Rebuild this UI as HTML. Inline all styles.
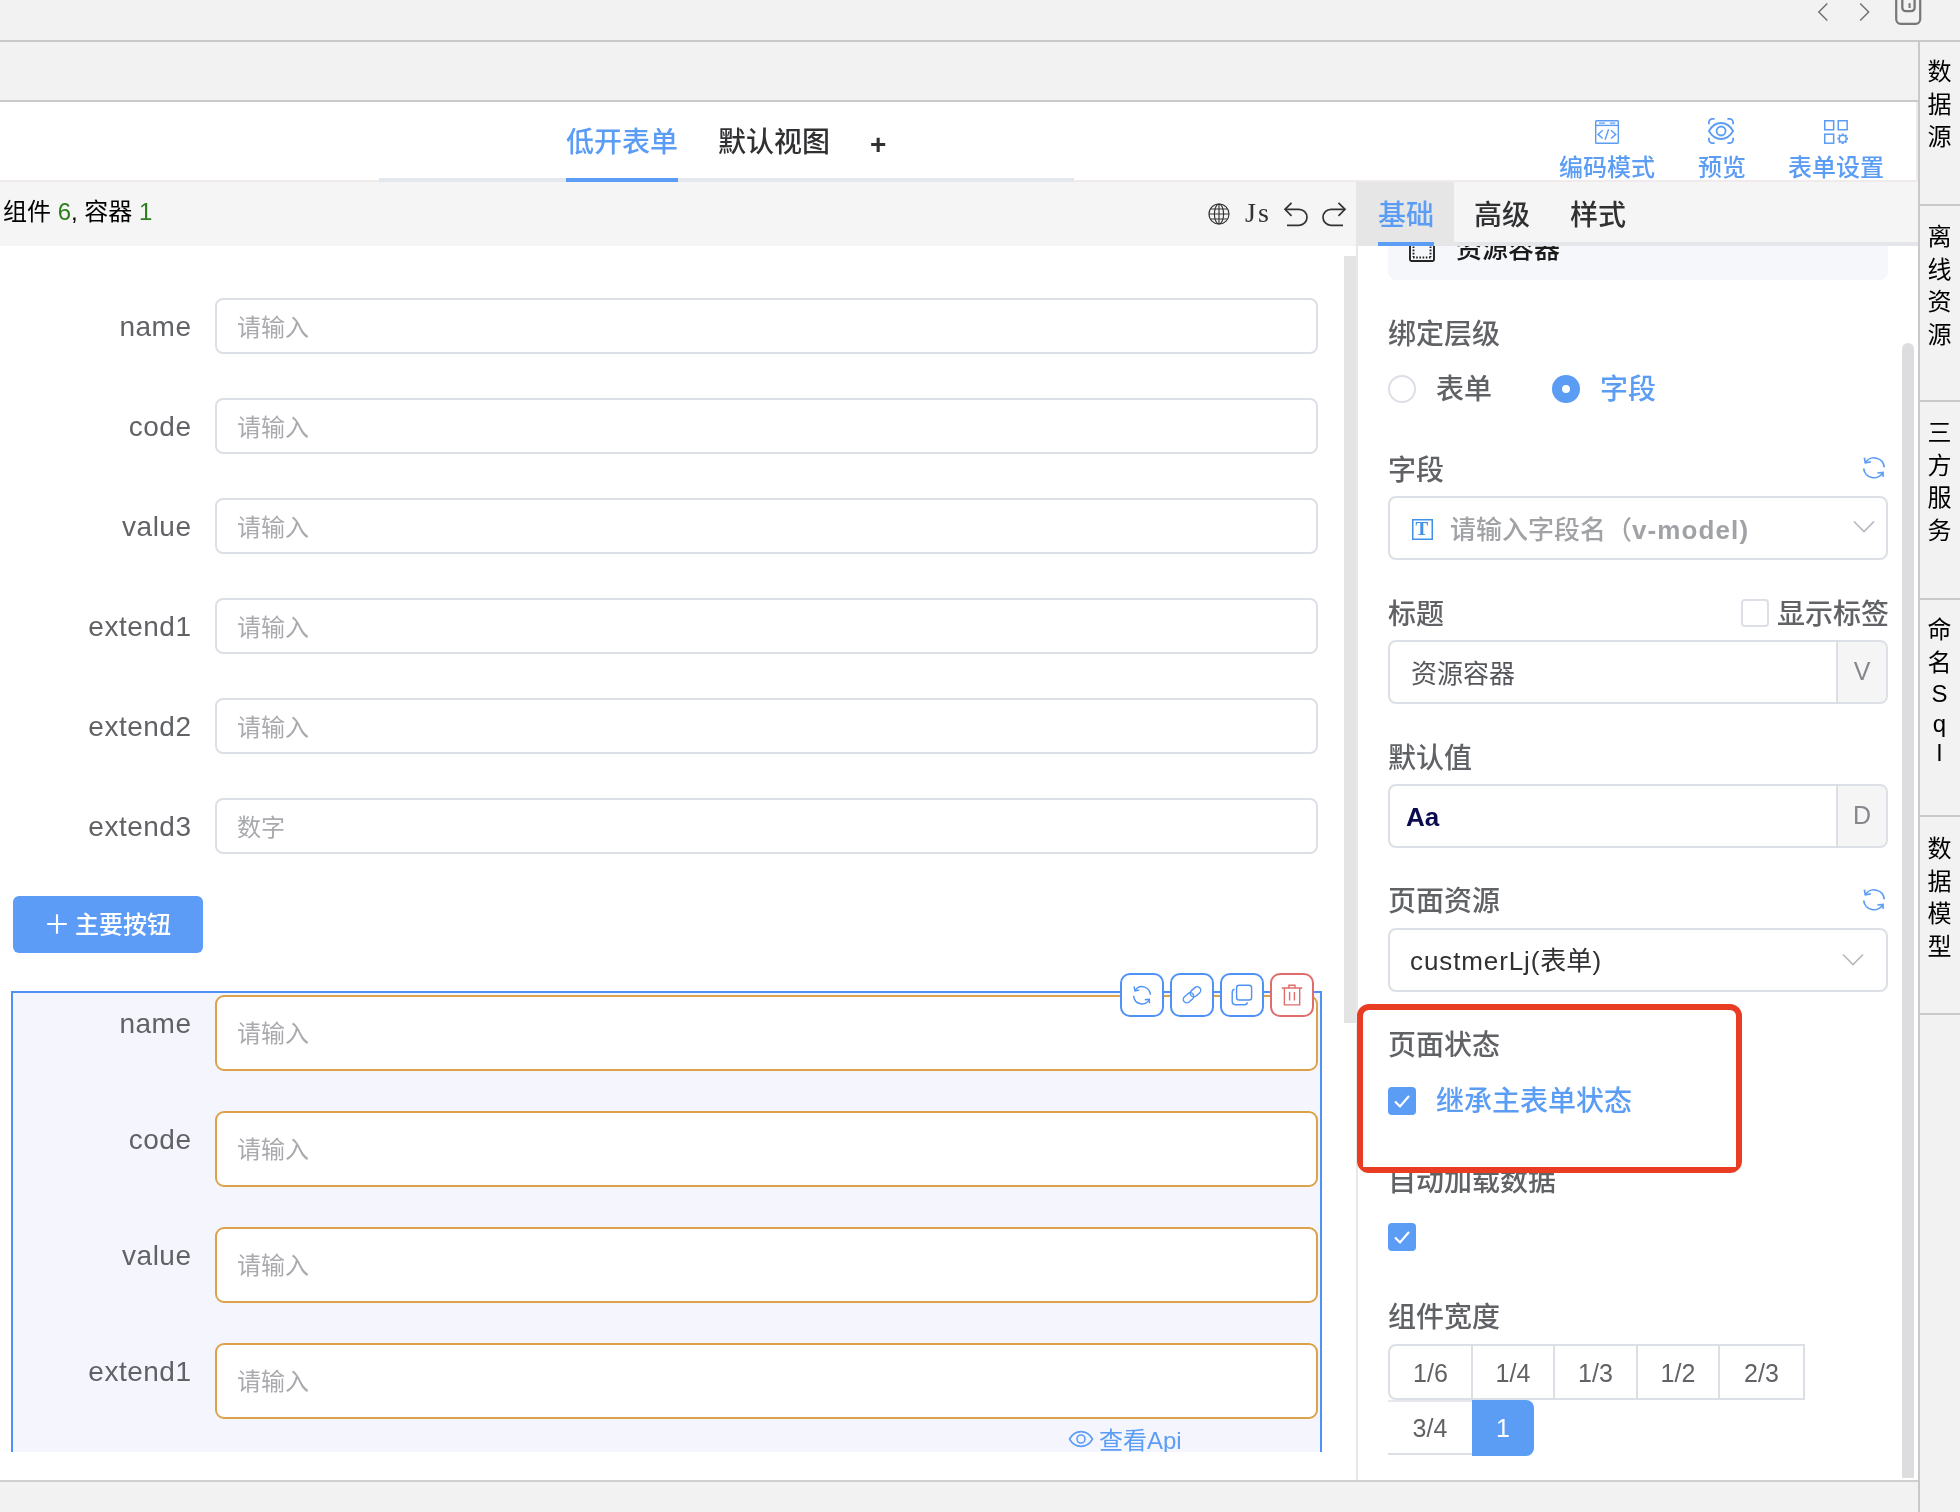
<!DOCTYPE html>
<html lang="zh-CN">
<head>
<meta charset="utf-8">
<title>低开表单</title>
<style>
*{box-sizing:border-box;margin:0;padding:0}
html,body{width:1960px;height:1512px;overflow:hidden;background:#f2f2f2}
body{will-change:transform;position:relative;font-family:"Liberation Sans","Noto Sans CJK SC",sans-serif;color:#303133}
.abs{position:absolute}
.t{position:absolute;white-space:nowrap;line-height:1}
/* top */
#hl1{left:0;top:40px;width:1960px;height:2px;background:#c9c9c9}
#hl2{left:0;top:100px;width:1918px;height:2px;background:#c9c9c9}
#white{left:0;top:102px;width:1916px;height:78px;background:#fff;border-bottom:0}
#pink{left:0;top:180px;width:1918px;height:2px;background:#f1eaea}
#tabline{left:379px;top:178px;width:695px;height:4px;background:#e4e7ed}
#tabblue{left:566px;top:178px;width:112px;height:4px;background:#5b9cf5}
#toolbar{left:0;top:182px;width:1918px;height:64px;background:#f5f5f5}
#canvas{left:0;top:246px;width:1357px;height:1234px;background:#fff}
#vscroll{left:1344px;top:256px;width:12px;height:767px;background:#e4e4e4}
/* right sidebar */
#side{left:1918px;top:42px;width:42px;height:1470px;background:#f2f2f2;border-left:2px solid #c9c9c9}
.sl{position:absolute;left:1920px;width:40px;height:2px;background:#c9c9c9}
.vt{position:absolute;left:1919.5px;width:40px;text-align:center;font-size:24px;line-height:32.5px;color:#000}
.vt .la{display:block;line-height:29.5px}

.lab{position:absolute;left:0;width:191.5px;letter-spacing:0.5px;text-align:right;font-size:28px;line-height:32px;color:#606266;white-space:nowrap}
.inp{position:absolute;left:215px;width:1103px;height:56px;border:2px solid #dcdfe6;border-radius:8px;background:#fff}
.inp span,.inp2 span{position:absolute;left:21px;font-size:24px;line-height:24px;color:#a9aaae;white-space:nowrap}
.inp span{top:16px;left:20px}
.inp2{position:absolute;left:215px;width:1103px;height:76px;border:2px solid #dba24a;border-radius:9px;background:#fff}
.inp2 span{top:25px;left:20px}
#cont{left:11px;top:991px;width:1311px;height:461px;background:#f5f6fd;border:2px solid #4f92f6;border-bottom:none}
.ab{position:absolute;top:973px;width:44px;height:44px;border:2px solid #4f92f6;border-radius:10px;background:#fff}
.ab svg{position:absolute;left:-2px;top:-2px;width:44px;height:44px}

.pl{position:absolute;left:1388px;font-size:28px;line-height:28px;color:#606266;font-weight:500;white-space:nowrap}
.box{position:absolute;left:1388px;width:500px;height:64px;border:2px solid #dcdfe6;border-radius:8px;background:#fff;overflow:hidden}
.box .app{position:absolute;right:0;top:0;width:50px;height:60px;background:#f5f5f6;border-left:2px solid #dcdfe6;text-align:center;font-size:25px;line-height:59px;color:#85878c}
.box .tx{position:absolute;left:21px;top:20px;font-size:26px;line-height:26px;white-space:nowrap}
.cb{position:absolute;width:28px;height:28px;border-radius:4px;background:#5b9cf5}
.cb svg{position:absolute;left:0;top:0;width:28px;height:28px}
.wb{position:absolute;top:1344px;height:56px;border:2px solid #dcdfe6;border-left:none;background:#fff;text-align:center;font-size:25px;line-height:54px;color:#606266}
.ref{position:absolute;left:1862.5px;width:22px;height:22.5px}
/* bottom */
#bl{left:0;top:1480px;width:1918px;height:2px;background:#d0d0d0}
#bottom{left:0;top:1482px;width:1918px;height:30px;background:#f2f2f2}
/* panel */
#panel{left:1357px;top:246px;width:561px;height:1234px;background:#fff}
</style>
</head>
<body>
<div class="abs" id="hl1"></div>
<div class="abs" id="hl2"></div>
<div class="abs" id="white"></div>
<div class="abs" id="pink"></div>
<div class="abs" style="left:1916px;top:102px;width:2px;height:80px;background:#f1eaea"></div>
<div class="abs" id="tabline"></div>
<div class="abs" id="tabblue"></div>
<div class="abs" id="toolbar"></div>
<div class="abs" id="canvas"></div>
<div class="abs" id="vscroll"></div>
<div class="abs" id="panel"></div>
<div class="abs" id="bl"></div>
<div class="abs" id="bottom"></div>
<div class="abs" id="side"></div>

<div class="sl" style="top:204px"></div>
<div class="sl" style="top:400px"></div>
<div class="sl" style="top:598px"></div>
<div class="sl" style="top:815px"></div>
<div class="sl" style="top:1013px"></div>
<div class="vt" id="v1" style="top:56px">数<br>据<br>源</div>
<div class="vt" id="v2" style="top:221px">离<br>线<br>资<br>源</div>
<div class="vt" id="v3" style="top:417px">三<br>方<br>服<br>务</div>
<div class="vt" id="v4" style="top:614px">命<br>名<br><span class="la">S<br>q<br>l</span></div>
<div class="vt" id="v5" style="top:833px">数<br>据<br>模<br>型</div>
<!--SIDE-->

<svg class="abs" style="left:1810px;top:0;width:120px;height:30px" viewBox="0 0 120 30" fill="none" stroke="#6e6e6e" stroke-width="1.4">
<path d="M17.3 3.5 L8.8 12 L17.3 20.5"/>
<path d="M50.2 3.5 L58.7 12 L50.2 20.5"/>
<rect x="86.2" y="-4" width="24" height="27.8" rx="4.5" stroke="#777" stroke-width="2.2"/>
<path d="M92.3 -2 V7.7 a3.5 3.5 0 0 0 3.5 3.5 h5.3 a3.5 3.5 0 0 0 3.5 -3.5 V-2" stroke="#777" stroke-width="2.3"/>
<path d="M99.6 3.2 V8" stroke="#777" stroke-width="2.1"/>
</svg>
<div class="t" id="tab1" style="left:566px;top:129px;font-size:28px;color:#5b9cf5;font-weight:500">低开表单</div>
<div class="t" id="tab2" style="left:718px;top:129px;font-size:28px;color:#303133;font-weight:500">默认视图</div>
<div class="t" id="tabp" style="left:870px;top:131px;font-size:28px;color:#303133;font-weight:bold">+</div>
<svg class="abs" id="ic1" style="left:1595px;top:120px;width:24px;height:24px" viewBox="0 0 24 24" fill="none" stroke="#5b9cf5" stroke-width="1.4">
<rect x="0.7" y="0.7" width="22.6" height="22.6" rx="0.8"/><path d="M0.7 5.4 H23.3"/><path d="M3.9 3.1 H10 M15 3.1 H20.3" stroke-width="1.1"/>
<path d="M7.8 10.2 L3 14.4 L7.8 18.5 M16 10.2 L20.8 14.4 L16 18.5 M13.6 9.2 L10.1 19.8"/>
</svg>
<svg class="abs" id="ic2" style="left:1708px;top:118px;width:26px;height:26px" viewBox="0 0 26 26" fill="none" stroke="#5b9cf5" stroke-width="1.8">
<path d="M0.9 13 C5 6 9.5 5 13 5 S21 6 25.1 13 C21 20 16.5 21 13 21 S5 20 0.9 13 Z"/>
<circle cx="13.1" cy="13" r="4.5"/>
<path d="M0.9 6.3 V4.5 A3.6 3.6 0 0 1 4.5 0.9 H6.6 M19.4 0.9 H21.5 A3.6 3.6 0 0 1 25.1 4.5 V6.3 M25.1 19.7 V21.5 A3.6 3.6 0 0 1 21.5 25.1 H19.4 M6.6 25.1 H4.5 A3.6 3.6 0 0 1 0.9 21.5 V19.7"/>
</svg>
<svg class="abs" id="ic3" style="left:1824px;top:120px;width:24px;height:24px" viewBox="0 0 24 24" fill="none" stroke="#5b9cf5" stroke-width="1.5">
<rect x="0.75" y="0.75" width="8.9" height="9"/><rect x="14.25" y="0.75" width="8.9" height="9"/><rect x="0.75" y="14.2" width="8.9" height="9"/>
<circle cx="18.7" cy="18.7" r="3.5"/><path d="M22.70 18.70 L24.00 18.70 M21.53 21.53 L22.45 22.45 M18.70 22.70 L18.70 24.00 M15.87 21.53 L14.95 22.45 M14.70 18.70 L13.40 18.70 M15.87 15.87 L14.95 14.95 M18.70 14.70 L18.70 13.40 M21.53 15.87 L22.45 14.95" stroke-width="2.2"/>
</svg>
<div class="t" id="b1" style="top:156px;left:1559px;font-size:24px;color:#5b9cf5;font-weight:500">编码模式</div>
<div class="t" id="b2" style="top:156px;left:1698px;font-size:24px;color:#5b9cf5;font-weight:500">预览</div>
<div class="t" id="b3" style="top:156px;left:1788px;font-size:24px;color:#5b9cf5;font-weight:500">表单设置</div>
<div class="t" id="cnt" style="left:3px;top:200px;font-size:24px;color:#000">组件 <span style="color:#2c7d1c">6</span>, 容器 <span style="color:#2c7d1c">1</span></div>
<svg class="abs" id="globe" style="left:1208px;top:203px;width:22px;height:22px" viewBox="0 0 22 22" fill="none" stroke="#333" stroke-width="1.15">
<circle cx="11" cy="11" r="10"/><ellipse cx="11" cy="11" rx="4.6" ry="10"/><path d="M11 1 V21 M1 11 H21 M2.6 6 H19.4 M2.6 16 H19.4"/>
</svg>
<div class="t" id="js" style="left:1245px;top:199px;font-size:28px;letter-spacing:2px;color:#333;font-family:'Liberation Serif',serif">Js</div>
<svg class="abs" id="undo" style="left:1283px;top:201px;width:26px;height:26px" viewBox="0 0 26 26" fill="none" stroke="#333" stroke-width="1.7">
<path d="M8.5 1.8 L2 8.3 L8.5 14.8"/><path d="M2.2 8.3 H16 A8 8 0 0 1 16 24.3 H4"/>
</svg>
<svg class="abs" id="redo" style="left:1321px;top:201px;width:26px;height:26px" viewBox="0 0 26 26" fill="none" stroke="#333" stroke-width="1.7">
<path d="M17.5 1.8 L24 8.3 L17.5 14.8"/><path d="M23.8 8.3 H10 A8 8 0 0 0 10 24.3 H22"/>
</svg>
<div class="abs" style="left:1356px;top:182px;width:98px;height:64px;background:#e6e6e6"></div>
<div class="abs" style="left:1454px;top:242px;width:464px;height:4px;background:#e4e6ea"></div>
<div class="abs" style="left:1378px;top:242px;width:56px;height:4px;background:#5b9cf5"></div>
<div class="t" id="pt1" style="font-weight:500;left:1378px;top:202px;font-size:28px;color:#5b9cf5">基础</div>
<div class="t" id="pt2" style="font-weight:500;left:1474px;top:202px;font-size:28px;color:#303133">高级</div>
<div class="t" id="pt3" style="font-weight:500;left:1570px;top:202px;font-size:28px;color:#303133">样式</div>
<!--TOP-->
<div class="lab" id="l0" style="top:311px">name</div><div class="inp" id="i0" style="top:298px"><span>请输入</span></div>
<div class="lab" id="l1" style="top:411px">code</div><div class="inp" id="i1" style="top:398px"><span>请输入</span></div>
<div class="lab" id="l2" style="top:511px">value</div><div class="inp" id="i2" style="top:498px"><span>请输入</span></div>
<div class="lab" id="l3" style="top:611px">extend1</div><div class="inp" id="i3" style="top:598px"><span>请输入</span></div>
<div class="lab" id="l4" style="top:711px">extend2</div><div class="inp" id="i4" style="top:698px"><span>请输入</span></div>
<div class="lab" id="l5" style="top:811px">extend3</div><div class="inp" id="i5" style="top:798px"><span>数字</span></div>
<div class="abs" id="btn" style="left:13px;top:896px;width:190px;height:57px;background:#5c9cf7;border-radius:6px"></div>
<svg class="abs" style="left:47px;top:914px;width:20px;height:20px" viewBox="0 0 20 20" stroke="#fff" stroke-width="2.1" fill="none"><path d="M10 0.2 V19.8 M0.2 10 H19.8"/></svg>
<div class="t" id="btnt" style="left:75px;top:913px;font-size:24px;color:#fff;font-weight:500">主要按钮</div>
<div class="abs" id="cont"></div>
<div class="lab" id="m0" style="top:1008px">name</div><div class="inp2" id="j0" style="top:995px"><span>请输入</span></div>
<div class="lab" id="m1" style="top:1124px">code</div><div class="inp2" id="j1" style="top:1111px"><span>请输入</span></div>
<div class="lab" id="m2" style="top:1240px">value</div><div class="inp2" id="j2" style="top:1227px"><span>请输入</span></div>
<div class="lab" id="m3" style="top:1356px">extend1</div><div class="inp2" id="j3" style="top:1343px"><span>请输入</span></div>
<div class="ab" style="left:1120px"><svg viewBox="0 0 44 44" fill="none" stroke="#4f92f6" stroke-width="1.4"><path d="M14.9 17.9 A8.4 9 0 0 1 30.4 21.8 M13.6 22.9 A8.4 9 0 0 0 29.3 26.3"/><path d="M14.1 13.4 L14.9 17.9 L19.4 17.1 M24.8 26.8 L29.3 26.3 L29.5 30.2"/></svg></div>
<div class="ab" style="left:1170px"><svg viewBox="0 0 44 44" fill="none" stroke="#4f92f6" stroke-width="1.4"><g transform="rotate(-41 22 21.8)"><rect x="11.6" y="18.3" width="11.6" height="7" rx="3.5"/><rect x="20.8" y="18.3" width="11.6" height="7" rx="3.5"/></g></svg></div>
<div class="ab" style="left:1220px"><svg viewBox="0 0 44 44" fill="none" stroke="#4f92f6" stroke-width="1.4"><rect x="16.6" y="12.2" width="15" height="14.8" rx="2.6"/><path d="M14.6 16.2 Q12.2 16.6 12.2 19.5 V28.6 Q12.2 31.7 15.3 31.7 H24.3 Q27.2 31.7 27.5 29.4"/></svg></div>
<div class="ab" style="left:1270px;border-color:#e06c6c"><svg viewBox="0 0 44 44" fill="none" stroke="#e06c6c" stroke-width="1.4"><path d="M11.7 15 H32.2 M18.9 14.6 V12.3 H25 V14.6 M14.4 15 V31.9 H29.7 V15 M19.6 19 V27.6 M24.4 19 V27.6"/></svg></div>
<svg class="abs" style="left:1068px;top:1429px;width:26px;height:20px" viewBox="0 0 26 20" fill="none" stroke="#5b9cf5" stroke-width="1.6"><path d="M1.5 10 C5 3.8 9.5 2.6 13 2.6 S21 3.8 24.5 10 C21 16.2 16.5 17.4 13 17.4 S5 16.2 1.5 10 Z"/><circle cx="13" cy="10" r="4"/></svg>
<div class="t" id="api" style="left:1099px;top:1429px;font-size:24px;color:#5b9cf5">查看Api</div>
<div class="abs" style="left:0;top:1452px;width:1344px;height:28px;background:#fff"></div>
<div class="abs" style="left:1356px;top:246px;width:2px;height:1234px;background:#e8e8e8"></div>
<!--CANVAS-->

<div class="abs" style="left:1358px;top:246px;width:544px;height:40px;overflow:hidden">
 <div class="abs" style="left:30px;top:-30px;width:500px;height:64px;background:#f6f7fb;border-radius:8px"></div>
 <svg class="abs" style="left:51px;top:-10px;width:26px;height:26px" viewBox="0 0 26 26" fill="none" stroke="#222" stroke-width="1.9"><path d="M1 4 V23.5 Q1 25 2.5 25 H23.5 Q25 25 25 23.5 V4"/><path d="M4 21.5 H22" stroke-dasharray="1.6 1.6"/><path d="M4.5 4 V21 M21.5 4 V21" stroke-dasharray="1.6 1.6"/></svg>
 <div class="t" id="rc" style="left:98px;top:-10px;font-size:26px;color:#1a1a1a;font-weight:500">资源容器</div>
</div>
<div class="pl" id="p1" style="top:321px">绑定层级</div>
<div class="abs" style="left:1388px;top:375px;width:28px;height:28px;border:2px solid #dcdfe6;border-radius:50%;background:#fff"></div>
<div class="t" id="r1" style="left:1436px;top:376px;font-size:28px;color:#606266;font-weight:500">表单</div>
<div class="abs" style="left:1552px;top:375px;width:28px;height:28px;border-radius:50%;background:#5b9cf5"></div>
<div class="abs" style="left:1562px;top:385px;width:8px;height:8px;border-radius:50%;background:#fff"></div>
<div class="t" id="r2" style="left:1600px;top:376px;font-size:28px;color:#5b9cf5;font-weight:500">字段</div>
<div class="pl" id="p2" style="top:457px">字段</div>
<svg class="ref" style="top:456px" viewBox="13 12 18 19.6" preserveAspectRatio="none" fill="none" stroke="#5b9cf5" stroke-width="1.4"><path d="M14.9 17.9 A8.4 9 0 0 1 30.4 21.8 M13.6 22.9 A8.4 9 0 0 0 29.3 26.3"/><path d="M14.1 13.4 L14.9 17.9 L19.4 17.1 M24.8 26.8 L29.3 26.3 L29.5 30.2"/></svg>
<div class="box" id="bx1" style="top:496px;height:64px">
 <svg class="abs" style="left:21.5px;top:20.5px;width:21px;height:21px" viewBox="0 0 21 21" fill="none" stroke="#3f90e6" stroke-width="1.5"><rect x="0.75" y="0.75" width="19.5" height="19.5"/></svg>
 <div class="t" id="tT" style="left:25.5px;top:20px;font-size:19px;color:#3f90e6;font-family:'Liberation Serif',serif;line-height:22px;font-weight:bold">T</div>
 <div class="tx" id="ph1" style="left:60px;top:19px;color:#a0a2a6;font-weight:500">请输入字段名（<span style="letter-spacing:1.1px;font-weight:bold">v-model)</span></div>
 <svg class="abs" style="left:463px;top:22px;width:22px;height:14px" viewBox="0 0 22 14" fill="none" stroke="#b4b7bd" stroke-width="1.6"><path d="M1 1.5 L11 11.5 L21 1.5"/></svg>
</div>
<div class="pl" id="p3" style="top:601px">标题</div>
<div class="abs" style="left:1741px;top:599px;width:28px;height:28px;border:2px solid #dcdfe6;border-radius:4px;background:#fff"></div>
<div class="t" id="cbl" style="left:1777px;top:601px;font-size:28px;color:#606266;font-weight:500">显示标签</div>
<div class="box" id="bx2" style="top:640px"><div class="tx" id="tx2" style="color:#55575c;top:19px">资源容器</div><div class="app">V</div></div>
<div class="pl" id="p4" style="top:745px">默认值</div>
<div class="box" id="bx3" style="top:784px"><div class="tx" id="tx3" style="left:16px;top:18px;color:#0b0b4f;font-weight:bold">Aa</div><div class="app">D</div></div>
<div class="pl" id="p5" style="top:888px">页面资源</div>
<svg class="ref" style="top:888px" viewBox="13 12 18 19.6" preserveAspectRatio="none" fill="none" stroke="#5b9cf5" stroke-width="1.4"><path d="M14.9 17.9 A8.4 9 0 0 1 30.4 21.8 M13.6 22.9 A8.4 9 0 0 0 29.3 26.3"/><path d="M14.1 13.4 L14.9 17.9 L19.4 17.1 M24.8 26.8 L29.3 26.3 L29.5 30.2"/></svg>
<div class="box" id="bx4" style="top:928px"><div class="tx" id="tx4" style="color:#303133;left:20px;top:18px"><span style="letter-spacing:0.9px">custmerLj(</span>表单<span>)</span></div>
 <svg class="abs" style="left:452px;top:23px;width:22px;height:14px" viewBox="0 0 22 14" fill="none" stroke="#b4b7bd" stroke-width="1.6"><path d="M1 1.5 L11 11.5 L21 1.5"/></svg>
</div>
<div class="pl" id="p6" style="top:1032px">页面状态</div>
<div class="cb" style="left:1388px;top:1087px"><svg viewBox="0 0 28 28" fill="none" stroke="#fff" stroke-width="2.2"><path d="M7 14.5 L12 19.5 L21 9"/></svg></div>
<div class="t" id="inh" style="left:1436px;top:1088px;font-size:28px;color:#5b9cf5;font-weight:500">继承主表单状态</div>
<div class="pl" id="p7" style="top:1168px">自动加载数据</div>
<div class="abs" id="red" style="left:1357px;top:1004px;width:385px;height:169px;border:6px solid #e83c23;border-radius:12px;background:transparent"></div>
<div class="abs" style="left:1363px;top:1150px;width:373px;height:17px;background:#fff"></div>
<div class="cb" style="left:1388px;top:1223px"><svg viewBox="0 0 28 28" fill="none" stroke="#fff" stroke-width="2.2"><path d="M7 14.5 L12 19.5 L21 9"/></svg></div>
<div class="pl" id="p8" style="top:1304px">组件宽度</div>
<div class="wb" style="left:1388px;width:85px;border-left:2px solid #dcdfe6;border-radius:8px 0 0 8px">1/6</div>
<div class="wb" style="left:1473px;width:82px">1/4</div>
<div class="wb" style="left:1555px;width:83px">1/3</div>
<div class="wb" style="left:1638px;width:82px">1/2</div>
<div class="wb" style="left:1720px;width:85px">2/3</div>
<div class="wb" style="left:1388px;top:1400px;height:55px;width:84px;border-right:none;border-top-color:#e6e8ed;line-height:52px">3/4</div>
<div class="wb" style="left:1472px;top:1400px;height:56px;width:62px;border:none;background:#5b9cf5;color:#fff;border-radius:0 8px 8px 0;line-height:56px">1</div>
<div class="abs" style="left:1902px;top:343px;width:12px;height:1135px;background:#dddde0;border-radius:6px 6px 0 0"></div>
<!--PANEL-->
</body>
</html>
